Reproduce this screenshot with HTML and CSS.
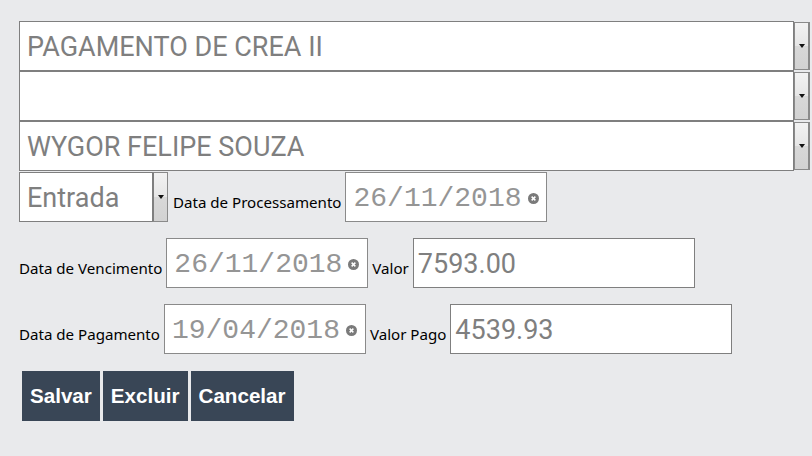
FILE: index.html
```html
<!DOCTYPE html>
<html lang="pt-BR">
<head>
<meta charset="utf-8">
<title>Pagamento</title>
<link rel="stylesheet" href="styles.css">
</head>
<body>
<form class="form">
  <div class="select wide">
    <div class="select-field">PAGAMENTO DE CREA II</div>
    <div class="select-btn"><span class="caret"></span></div>
  </div>
  <div class="select wide">
    <div class="select-field"></div>
    <div class="select-btn"><span class="caret"></span></div>
  </div>
  <div class="select wide">
    <div class="select-field">WYGOR FELIPE SOUZA</div>
    <div class="select-btn"><span class="caret"></span></div>
  </div>

  <div class="row row-first">
    <div class="select small">
      <div class="select-field">Entrada</div>
      <div class="select-btn full"><span class="caret"></span></div>
    </div>
    <label class="label">Data de Processamento</label>
    <div class="date">
      <span class="date-text">26/11/2018</span>
      <svg class="clear" width="11" height="11" viewBox="0 0 10 10"><circle cx="5" cy="5" r="5" fill="#7a7a7a"/><path d="M3.3 3.3 L6.7 6.7 M6.7 3.3 L3.3 6.7" stroke="#fff" stroke-width="1.3"/></svg>
    </div>
  </div>

  <div class="row">
    <label class="label">Data de Vencimento</label>
    <div class="date">
      <span class="date-text">26/11/2018</span>
      <svg class="clear" width="11" height="11" viewBox="0 0 10 10"><circle cx="5" cy="5" r="5" fill="#7a7a7a"/><path d="M3.3 3.3 L6.7 6.7 M6.7 3.3 L3.3 6.7" stroke="#fff" stroke-width="1.3"/></svg>
    </div>
    <label class="label">Valor</label>
    <div class="text-input">7593.00</div>
  </div>

  <div class="row">
    <label class="label">Data de Pagamento</label>
    <div class="date">
      <span class="date-text">19/04/2018</span>
      <svg class="clear" width="11" height="11" viewBox="0 0 10 10"><circle cx="5" cy="5" r="5" fill="#7a7a7a"/><path d="M3.3 3.3 L6.7 6.7 M6.7 3.3 L3.3 6.7" stroke="#fff" stroke-width="1.3"/></svg>
    </div>
    <label class="label">Valor Pago</label>
    <div class="text-input">4539.93</div>
  </div>

  <div class="buttons">
    <button type="button" class="btn">Salvar</button>
    <button type="button" class="btn">Excluir</button>
    <button type="button" class="btn">Cancelar</button>
  </div>
</form>
</body>
</html>
```

FILE: styles.css
```css
html, body {
  margin: 0;
  padding: 0;
  background: #e9eaec;
}

.form {
  padding: 21px 2px 0 19px;
  display: flex;
  flex-direction: column;
}

.select {
  display: flex;
  height: 50px;
  box-sizing: border-box;
}

.select.wide {
  width: 791px;
}

.select.small {
  width: 149px;
}

.select-field {
  flex: 1;
  box-sizing: border-box;
  height: 50px;
  background: #fff;
  border: 1px solid #7f7f7f;
  border-right: 0;
  padding: 2px 0 0 7px;
  display: flex;
  align-items: center;
  font-family: Roboto, "Liberation Sans", sans-serif;
  font-size: 27px;
  color: #7f7f7f;
  white-space: nowrap;
  overflow: hidden;
}

.select.wide .select-field {
  border-right: 1px solid #7f7f7f;
}

.select-btn {
  width: 16px;
  box-sizing: border-box;
  margin: 1px 0;
  border: 1px solid #8a8a8a;
  border-width: 1px 2px 1px 1px;
  background: linear-gradient(#f2f2f2 0%, #e6e6e6 50%, #d8d8d8 50%, #d2d2d2 100%);
  display: flex;
  align-items: center;
  justify-content: center;
}

.select-btn.full {
  margin: 0;
  border: 1px solid #8a8a8a;
  border-left: 2px solid #7f7f7f;
}

.caret {
  width: 0;
  height: 0;
  border-left: 3px solid transparent;
  border-right: 3px solid transparent;
  border-top: 4px solid #111;
}

.row {
  display: flex;
  align-items: center;
  gap: 4px;
  margin-top: 16px;
}

.row.row-first {
  margin-top: 1px;
  gap: 5px;
}

.row.row-first .label {
  margin-right: -1px;
}

.label {
  font-family: "Noto Sans", "Open Sans", sans-serif;
  font-size: 15.1px;
  line-height: 20px;
  padding-top: 10px;
  color: #000;
  white-space: nowrap;
}

.date {
  width: 202px;
  height: 50px;
  box-sizing: border-box;
  background: #fff;
  border: 1px solid #8a8a8a;
  padding: 2px 0 0 7px;
  display: flex;
  align-items: center;
  gap: 6px;
}

.date-text {
  font-family: "Liberation Mono", "DejaVu Sans Mono", monospace;
  font-size: 28px;
  color: #959595;
}

.clear {
  flex: none;
}

.text-input {
  width: 282px;
  height: 50px;
  box-sizing: border-box;
  background: #fff;
  border: 1px solid #7f7f7f;
  padding: 2px 0 0 4px;
  display: flex;
  align-items: center;
  font-family: Roboto, "Liberation Sans", sans-serif;
  font-size: 27px;
  color: #7f7f7f;
}

.buttons {
  display: flex;
  gap: 3px;
  margin-top: 17px;
  padding-left: 3px;
}

.btn {
  height: 50px;
  margin: 0;
  border: 0;
  padding: 0 8px;
  background: #394656;
  color: #fff;
  font-family: "Liberation Sans", Arial, sans-serif;
  font-weight: bold;
  font-size: 20.6px;
  cursor: pointer;
}
```
